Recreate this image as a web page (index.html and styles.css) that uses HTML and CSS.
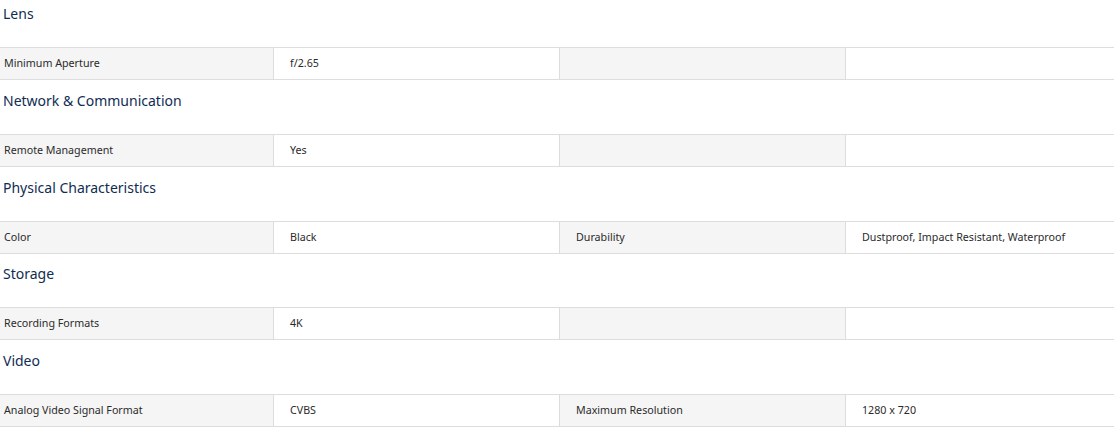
FILE: index.html
```html
<!DOCTYPE html>
<html lang="en">
<head>
<meta charset="utf-8">
<title>Specifications</title>
<link rel="stylesheet" href="styles.css">
</head>
<body>
<div class="specs">
  <section class="group">
    <h3 class="group-title">Lens</h3>
    <div class="row">
      <div class="cell label first">Minimum Aperture</div>
      <div class="cell value">f/2.65</div>
      <div class="cell label"></div>
      <div class="cell value"></div>
    </div>
  </section>
  <section class="group">
    <h3 class="group-title">Network &amp; Communication</h3>
    <div class="row">
      <div class="cell label first">Remote Management</div>
      <div class="cell value">Yes</div>
      <div class="cell label"></div>
      <div class="cell value"></div>
    </div>
  </section>
  <section class="group">
    <h3 class="group-title">Physical Characteristics</h3>
    <div class="row">
      <div class="cell label first">Color</div>
      <div class="cell value">Black</div>
      <div class="cell label">Durability</div>
      <div class="cell value">Dustproof, Impact Resistant, Waterproof</div>
    </div>
  </section>
  <section class="group">
    <h3 class="group-title">Storage</h3>
    <div class="row">
      <div class="cell label first">Recording Formats</div>
      <div class="cell value">4K</div>
      <div class="cell label"></div>
      <div class="cell value"></div>
    </div>
  </section>
  <section class="group">
    <h3 class="group-title">Video</h3>
    <div class="row">
      <div class="cell label first">Analog Video Signal Format</div>
      <div class="cell value">CVBS</div>
      <div class="cell label">Maximum Resolution</div>
      <div class="cell value">1280 x 720</div>
    </div>
  </section>
</div>
</body>
</html>
```
FILE: styles.css
```css
html, body {
  margin: 0;
  padding: 0;
  background: #ffffff;
}
body {
  font-family: "Noto Sans", "Open Sans", Arial, sans-serif;
  color: #333333;
}
.specs {
  display: flex;
  flex-direction: column;
  gap: 6.75px;
}
.group-title {
  margin: 0;
  padding: 4px 0 23px 3px;
  height: 20px;
  line-height: 20px;
  font-size: 14px;
  font-weight: 400;
  color: #0f2d52;
}
.row {
  display: grid;
  grid-template-columns: 273px 286px 286px 1fr;
  border-top: 1px solid #dddddd;
  border-bottom: 1px solid #dddddd;
  height: 31px;
}
.cell {
  font-size: 10.7px;
  line-height: 30px;
  padding-left: 16px;
  white-space: nowrap;
  overflow: hidden;
  color: #2b2b2b;
}
.cell + .cell {
  border-left: 1px solid #dddddd;
}
.cell.first {
  padding-left: 4px;
}
.label {
  background: #f5f5f5;
}
.value {
  background: #ffffff;
}
```
